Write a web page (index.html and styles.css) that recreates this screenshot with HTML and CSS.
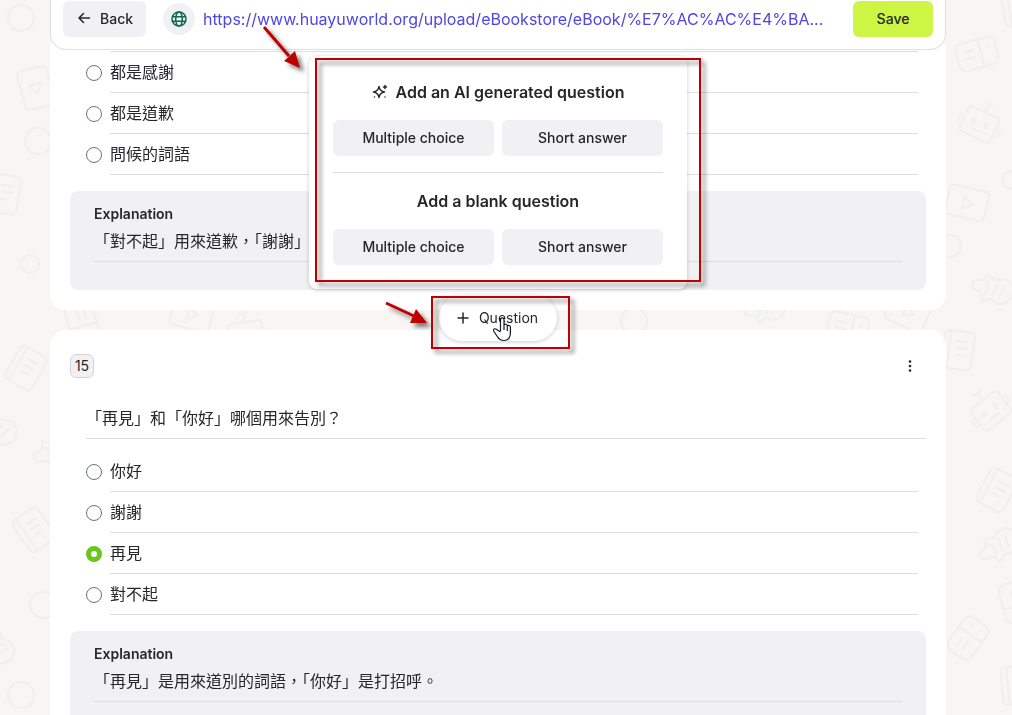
FILE: index.html
```html
<!DOCTYPE html>
<html lang="en">
<head>
    <meta charset="UTF-8">
    <meta name="viewport" content="width=device-width, initial-scale=1.0">
    <title>Edit questions</title>
    <link rel="stylesheet" href="styles.css">
</head>
<body>
    <svg class="doodles" aria-hidden="true">
        <defs>
            <g id="d-book"><rect x="-15" y="-19" width="30" height="38" rx="5"/><path d="M-9 -19v38M-3 -9h12M-3 -2h12M-3 5h8"/></g>
            <g id="d-robot"><rect x="-17" y="-12" width="34" height="27" rx="4"/><path d="M0 -12v-9M-5 -21h10M-21 -3v9M21 -3v9M-6 8h12"/><circle cx="-7" cy="0" r="2"/><circle cx="7" cy="0" r="2"/></g>
            <g id="d-play"><rect x="-20" y="-15" width="40" height="30" rx="4"/><path d="M-4 -6l10 6-10 6z"/></g>
            <g id="d-card"><rect x="-20" y="-14" width="40" height="28" rx="7"/><path d="M-13 -5h11M-13 2h11M4 -14v28M10 -4h5"/></g>
            <g id="d-horn"><path d="M-20 -4l10-3 3-7 8 5q9-6 17 0 7 9 0 18-8 8-17 1l-8 4-3-8-10-3zM-7 -8q5 8 0 16M5 -7l-4 14M12 -6l-4 13"/></g>
            <circle id="d-dot" r="13"/>
        </defs>
        <use href="#d-dot" x="21" y="18"/>
        <use href="#d-play" transform="translate(36 88) rotate(75)"/>
        <use href="#d-dot" x="38" y="141"/>
        <use href="#d-book" transform="translate(4 194) rotate(10)"/>
        <circle cx="30" cy="264" r="9"/>
        <use href="#d-card" transform="translate(82 322) rotate(75)"/>
        <use href="#d-book" transform="translate(26 368) rotate(30)"/>
        <use href="#d-horn" transform="translate(-4 428) rotate(25)"/>
        <use href="#d-horn" transform="translate(54 452) rotate(-20)"/>
        <use href="#d-book" transform="translate(34 530) rotate(-35)"/>
        <use href="#d-dot" x="43" y="605"/>
        <use href="#d-horn" transform="translate(-5 645) rotate(40)"/>
        <use href="#d-dot" x="21" y="695"/>
        <use href="#d-play" transform="translate(192 314) rotate(15)"/>
        <use href="#d-robot" transform="translate(246 334) rotate(-8)"/>
        <use href="#d-dot" x="634" y="321"/>
        <use href="#d-horn" transform="translate(764 308) rotate(-10)"/>
        <use href="#d-card" transform="translate(848 328) rotate(12)"/>
        <use href="#d-play" transform="translate(908 312) rotate(25)"/>
        <use href="#d-book" transform="translate(1018 6) rotate(-8)"/>
        <use href="#d-card" transform="translate(977 54) rotate(-15)"/>
        <use href="#d-robot" transform="translate(980 123) rotate(25)"/>
        <use href="#d-play" transform="translate(967 203) rotate(14)"/>
        <circle cx="1012" cy="180" r="9"/>
        <circle cx="950" cy="246" r="11"/>
        <use href="#d-horn" transform="translate(992 289) rotate(12)"/>
        <use href="#d-book" transform="translate(958 350) rotate(8)"/>
        <use href="#d-robot" transform="translate(990 410) rotate(-38)"/>
        <use href="#d-book" transform="translate(997 490) rotate(28)"/>
        <use href="#d-horn" transform="translate(998 546) rotate(-35)"/>
        <use href="#d-card" transform="translate(1016 602) rotate(75)"/>
        <use href="#d-card" transform="translate(968 638) rotate(-55)"/>
        <use href="#d-book" transform="translate(1017 685) rotate(-5)"/>
    </svg>

    <div class="page">
        <header class="topbar">
            <button class="btn btn-back" type="button">
                <svg class="icon" viewBox="0 0 16 16"><path d="M13.500 8H3M7.500 3.500L3 8l4.500 4.500"/></svg>
                Back
            </button>
            <span class="globe">
                <svg class="icon" viewBox="0 0 16 16"><circle cx="8" cy="8" r="7"/><ellipse cx="8" cy="8" rx="3.300" ry="7"/><path d="M1.500 5.800h13M1.500 10.200h13"/></svg>
            </span>
            <a class="source" href="#">https://www.huayuworld.org/upload/eBookstore/eBook/%E7%AC%AC%E4%BA...</a>
            <button class="btn btn-save" type="button">Save</button>
        </header>

        <main>
            <section class="card card-first">
                <ul class="options">
                    <li class="option"><input class="radio" type="radio" name="q14" aria-label="Option 1"><input class="field" type="text" value="都是感謝" aria-label="Option 1 text"></li>
                    <li class="option"><input class="radio" type="radio" name="q14" aria-label="Option 2"><input class="field" type="text" value="都是道歉" aria-label="Option 2 text"></li>
                    <li class="option"><input class="radio" type="radio" name="q14" aria-label="Option 3"><input class="field" type="text" value="問候的詞語" aria-label="Option 3 text"></li>
                </ul>
                <div class="explanation">
                    <label class="explanation-label" for="exp14">Explanation</label>
                    <input class="field" type="text" id="exp14" value="「對不起」用來道歉，「謝謝」">
                </div>
            </section>

            <div class="add-row">
                <button class="btn-question" type="button">
                    <svg class="icon" viewBox="0 0 16 16"><path d="M8 3v10M3 8h10"/></svg>
                    Question
                </button>
                <div class="popup">
                    <h2 class="popup-title">
                        <svg class="icon" viewBox="0 0 16 16"><path d="M7 2.500c.6 3.600 1.900 4.900 5.500 5.500-3.600.6-4.900 1.900-5.500 5.500C6.400 9.900 5.100 8.600 1.500 8 5.100 7.400 6.400 6.100 7 2.500zM13 1.500v3M11.500 3h3M2.500 13h.01M13 13h.01"/></svg>
                        Add an AI generated question
                    </h2>
                    <div class="popup-buttons">
                        <button class="btn" type="button">Multiple choice</button>
                        <button class="btn" type="button">Short answer</button>
                    </div>
                    <hr class="popup-line">
                    <h2 class="popup-title">Add a blank question</h2>
                    <div class="popup-buttons">
                        <button class="btn" type="button">Multiple choice</button>
                        <button class="btn" type="button">Short answer</button>
                    </div>
                </div>
            </div>

            <section class="card">
                <div class="card-head">
                    <span class="number">15</span>
                    <button class="menu" type="button" aria-label="Question menu">
                        <svg class="icon" viewBox="0 0 16 16"><circle cx="8" cy="3.500" r="1.300"/><circle cx="8" cy="8" r="1.300"/><circle cx="8" cy="12.500" r="1.300"/></svg>
                    </button>
                </div>
                <div class="question">
                    <input class="field" type="text" value="「再見」和「你好」哪個用來告別？" aria-label="Question text">
                </div>
                <ul class="options">
                    <li class="option"><input class="radio" type="radio" name="q15" aria-label="Option 1"><input class="field" type="text" value="你好" aria-label="Option 1 text"></li>
                    <li class="option"><input class="radio" type="radio" name="q15" aria-label="Option 2"><input class="field" type="text" value="謝謝" aria-label="Option 2 text"></li>
                    <li class="option"><input class="radio" type="radio" name="q15" aria-label="Option 3" checked><input class="field" type="text" value="再見" aria-label="Option 3 text"></li>
                    <li class="option"><input class="radio" type="radio" name="q15" aria-label="Option 4"><input class="field" type="text" value="對不起" aria-label="Option 4 text"></li>
                </ul>
                <div class="explanation">
                    <label class="explanation-label" for="exp15">Explanation</label>
                    <input class="field" type="text" id="exp15" value="「再見」是用來道別的詞語，「你好」是打招呼。">
                </div>
            </section>
        </main>
    </div>

    <!-- red marks and the pointer -->
    <svg class="marks" width="1012" height="715" viewBox="0 0 1012 715" aria-hidden="true">
        <g class="marks-red">
            <rect x="316" y="59" width="384" height="222"/>
            <rect x="432" y="297" width="137" height="51"/>
            <path d="M264 27l25 29"/>
            <path class="head" d="M300 68l-16-7 11-10z"/>
            <path d="M386 303l28 13"/>
            <path class="head" d="M427 323l-17 0 6-14z"/>
        </g>
        <path class="pointer" d="M500.500 331v-11c0-2.700 3.500-2.700 3.500 0v5c1-1.300 3.300-1 3.300 1 1-1 3.100-.7 3.100 1.200v5.300c0 5-2.400 8-6.400 8-3.300 0-5.200-1.400-6.700-4l-3.400-5c-1.300-2.300 1-3.600 2.700-2l3.900 2.500M504 325v5M507.300 326v5"/>
    </svg>
</body>
</html>
```

FILE: styles.css
```css
* {
    box-sizing: border-box;
}

body {
    margin: 0;
    background-color: #f7f6f2;
    color: #27272a;
    font-family: Inter, "Noto Sans CJK TC", sans-serif;
    font-size: 16px;
    line-height: 24px;
}

button,
input {
    font-family: inherit;
    color: inherit;
}

.doodles {
    position: fixed;
    top: 0;
    left: 0;
    width: 100%;
    height: 100%;
    fill: none;
    stroke: #f0efeb;
    stroke-width: 2;
}

.page {
    position: relative;
    padding: 0 66px 20px 50px;
}

.icon {
    width: 16px;
    height: 16px;
    flex: none;
    fill: none;
    stroke: currentColor;
    stroke-width: 1.5;
    stroke-linecap: round;
    stroke-linejoin: round;
}

/* top bar */
.topbar {
    position: relative;
    z-index: 1;
    display: flex;
    align-items: center;
    padding: 1px 12px 12px;
    background-color: #fff;
    border: 1px solid #e0e0e3;
    border-top: none;
    border-radius: 0 0 16px 16px;
}

.btn {
    display: flex;
    align-items: center;
    justify-content: center;
    gap: 8px;
    height: 36px;
    padding: 0 12px 2px;
    background-color: #f1f1f3;
    border: none;
    border-radius: 6px;
    font-size: 14px;
    font-weight: 500;
    cursor: pointer;
}

.btn-back {
    padding-left: 13px;
    padding-right: 13px;
}

.globe {
    display: flex;
    align-items: center;
    justify-content: center;
    flex: none;
    width: 32px;
    height: 32px;
    margin: 0 8px 0 17px;
    border-radius: 50%;
    background-color: #f1f1f3;
    color: #11694b;
}

.source {
    flex: 1;
    min-width: 0;
    overflow: hidden;
    white-space: nowrap;
    color: #4f46e5;
    text-decoration: none;
}

.btn-save {
    width: 80px;
    background-color: #cdf644;
}

/* question cards */
.card {
    padding: 24px 20px 20px;
    background-color: #fff;
    border-radius: 16px;
}

.card-first {
    margin-top: -16px;
    padding-top: 17px;
}

.card-first .options::before {
    content: "";
    display: block;
    margin-left: 24px;
    border-top: 1px solid #dedee1;
}

.card-head {
    display: flex;
    justify-content: space-between;
    align-items: center;
    padding-right: 8px;
}

.number {
    width: 24px;
    height: 24px;
    border: 1px solid #d4d4d8;
    border-radius: 6px;
    background-color: #f1f1f3;
    font-size: 14px;
    line-height: 22px;
    text-align: center;
}

.menu {
    display: flex;
    padding: 0;
    border: none;
    background: none;
    cursor: pointer;
}

.menu .icon {
    fill: currentColor;
    stroke: none;
}

.field {
    display: block;
    width: 100%;
    height: 41px;
    padding: 0 0 2px;
    border: none;
    border-bottom: 1px solid #dedee1;
    border-radius: 0;
    outline: none;
    background: none;
    font-size: 16px;
}

.question {
    padding: 20px 0 12px 16px;
}

.options {
    margin: 0;
    padding: 0 8px 0 16px;
    list-style: none;
}

.option {
    display: flex;
    align-items: center;
    gap: 8px;
}

.radio {
    appearance: none;
    flex: none;
    width: 16px;
    height: 16px;
    margin: 0;
    border: 1px solid #6b7280;
    border-radius: 50%;
    background-color: #fff;
}

.radio:checked {
    border: 5px solid #6cc51d;
}

.explanation {
    margin-top: 16px;
    padding: 11px 24px 28px;
    border-radius: 8px;
    background-color: #f1f1f3;
}

.explanation-label {
    display: block;
    font-size: 14px;
    font-weight: 600;
}

.explanation .field {
    height: 36px;
    padding-bottom: 8px;
}

/* add question */
.add-row {
    position: relative;
    z-index: 2;
    display: flex;
    justify-content: center;
    align-items: center;
    height: 20px;
}

.btn-question {
    display: flex;
    align-items: center;
    gap: 8px;
    flex: none;
    height: 46px;
    margin-bottom: 4px;
    padding: 0 19px 1px 16px;
    border: none;
    border-radius: 23px;
    background-color: #fff;
    box-shadow: 0 1px 4px rgba(0, 0, 0, 0.2);
    font-size: 14px;
    cursor: pointer;
}

.popup {
    position: absolute;
    bottom: calc(100% + 21px);
    left: 50%;
    width: 378px;
    padding: 24px;
    transform: translateX(-50%);
    border-radius: 8px;
    background-color: #fff;
    box-shadow: 0 1px 4px rgba(0, 0, 0, 0.2);
}

.popup-title {
    display: flex;
    align-items: center;
    justify-content: center;
    gap: 8px;
    margin: 0 0 16px;
    font-size: 16px;
    font-weight: 600;
    line-height: 24px;
}

.popup-buttons {
    display: grid;
    grid-template-columns: 1fr 1fr;
    gap: 8px;
}

.popup-line {
    margin: 16px 0;
    border: none;
    border-top: 1px solid #dedee1;
}

.marks {
    position: absolute;
    top: 0;
    left: 0;
    z-index: 3;
    pointer-events: none;
}

.marks-red {
    fill: none;
    stroke: #c00000;
    stroke-width: 2;
    filter: drop-shadow(4px 4px 2px rgba(0, 0, 0, 0.5));
}

.marks-red path {
    stroke-width: 3;
}

.marks-red .head {
    fill: #c00000;
    stroke: none;
}

.pointer {
    fill: #fff;
    stroke: #111827;
    stroke-width: 1.2;
    stroke-linejoin: round;
}
```
